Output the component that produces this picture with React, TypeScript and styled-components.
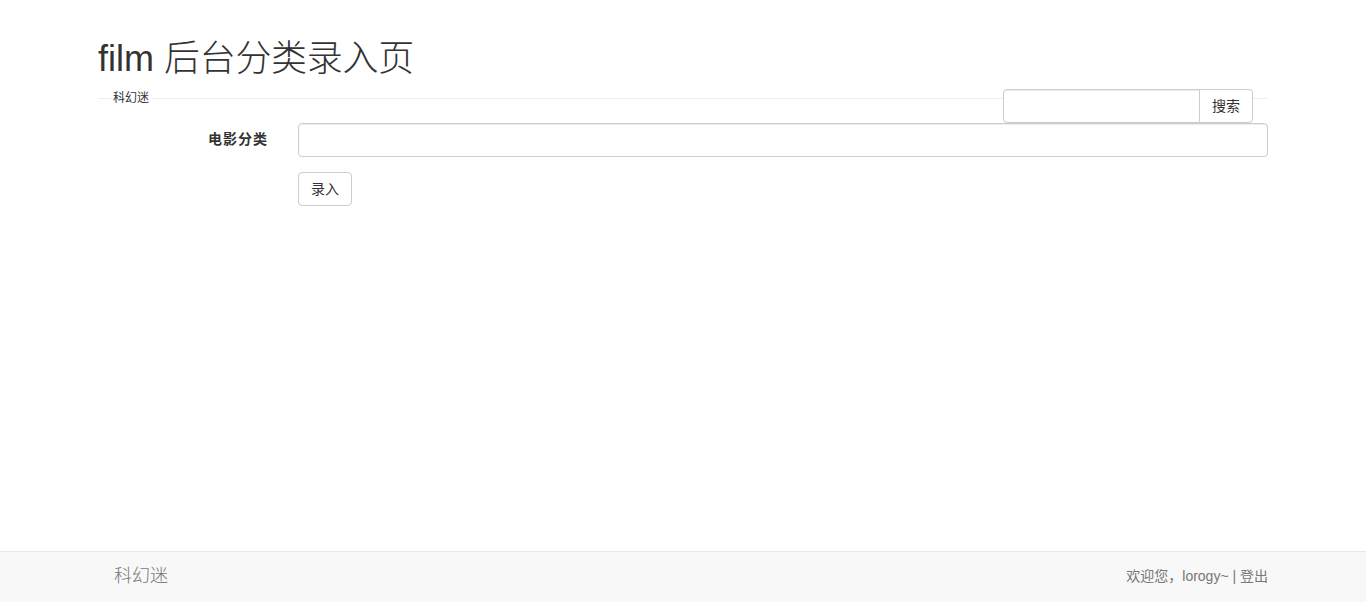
import React from 'react';
import styled, { createGlobalStyle } from 'styled-components';

const GlobalStyle = createGlobalStyle`
  html, body {
    margin: 0;
    padding: 0;
    background: #fff;
  }
  body {
    font-family: "Liberation Sans", "Noto Sans CJK SC", sans-serif;
    font-size: 14px;
    line-height: 1.42857;
    color: #333;
  }
  * {
    box-sizing: border-box;
  }
`;

const Page = styled.div`
  min-height: 602px;
  display: flex;
  flex-direction: column;
`;

const Main = styled.main`
  flex: 1;
`;

const Container = styled.div`
  width: 1170px;
  margin: 0 auto;
`;

const Title = styled.h1`
  margin: 0;
  padding-top: 39px;
  font-size: 36px;
  font-weight: 400;
  line-height: 40px;
  color: #333;

  span {
    font-weight: 300;
    letter-spacing: -0.3px;
  }
`;

const Toolbar = styled.div`
  position: relative;
  margin-top: 10px;
  height: 34px;
  display: flex;
  align-items: flex-start;
  justify-content: space-between;
  padding: 0 15px;

  &::before {
    content: '';
    position: absolute;
    left: 0;
    right: 0;
    top: 9px;
    border-top: 1px solid #eee;
  }
`;

const Legend = styled.span`
  position: relative;
  margin-top: 1px;
  padding-right: 3px;
  background: #fff;
  font-size: 12px;
  line-height: 17px;
  color: #333;
`;

const SearchGroup = styled.form`
  position: relative;
  display: flex;
  background: #fff;
`;

const SearchInput = styled.input`
  width: 197px;
  height: 34px;
  padding: 6px 12px;
  border: 1px solid #ccc;
  border-radius: 4px 0 0 4px;
  box-shadow: inset 0 1px 1px rgba(0, 0, 0, 0.075);
  font: inherit;
  outline: none;
`;

const Button = styled.button<{ $joined?: boolean }>`
  height: 34px;
  padding: 6px 12px;
  margin-left: ${(p) => (p.$joined ? '-1px' : '0')};
  border: 1px solid #ccc;
  border-radius: ${(p) => (p.$joined ? '0 4px 4px 0' : '4px')};
  background: #fff;
  color: #333;
  font-family: "Liberation Sans", "Noto Sans CJK SC", sans-serif;
  font-size: 14px;
  line-height: 20px;
  cursor: pointer;
`;

const Form = styled.form`
  display: flex;
  flex-direction: column;
  gap: 15px;
`;

const FormRow = styled.div`
  display: grid;
  grid-template-columns: 170px 1fr;
  column-gap: 30px;
  align-items: center;
`;

const Label = styled.label`
  text-align: right;
  font-weight: 700;
  font-size: 14px;
  letter-spacing: 1px;
  padding-right: 0;
`;

const TextInput = styled.input`
  width: 100%;
  height: 34px;
  padding: 6px 12px;
  border: 1px solid #ccc;
  border-radius: 4px;
  box-shadow: inset 0 1px 1px rgba(0, 0, 0, 0.075);
  font: inherit;
  outline: none;
`;

const Footer = styled.footer`
  height: 51px;
  background: #f8f8f8;
  border-top: 1px solid #e7e7e7;
`;

const FooterInner = styled(Container)`
  height: 100%;
  display: flex;
  align-items: center;
  justify-content: space-between;
  padding-left: 16px;
`;

const Brand = styled.a`
  font-size: 18px;
  font-weight: 300;
  color: #777;
  text-decoration: none;
`;

const UserInfo = styled.span`
  font-size: 14px;
  color: #777;

  a {
    color: #777;
    text-decoration: none;
  }
`;

export default function App() {
  return (
    <Page>
      <GlobalStyle />
      <Main>
        <Container>
          <Title>
            film <span>后台分类录入页</span>
          </Title>
          <Toolbar>
            <Legend>科幻迷</Legend>
            <SearchGroup onSubmit={(e) => e.preventDefault()}>
              <SearchInput type="text" />
              <Button $joined type="submit">搜索</Button>
            </SearchGroup>
          </Toolbar>
          <Form onSubmit={(e) => e.preventDefault()}>
            <FormRow>
              <Label>电影分类</Label>
              <TextInput type="text" />
            </FormRow>
            <FormRow>
              <span />
              <div>
                <Button type="submit">录入</Button>
              </div>
            </FormRow>
          </Form>
        </Container>
      </Main>
      <Footer>
        <FooterInner>
          <Brand href="#">科幻迷</Brand>
          <UserInfo>
            欢迎您，lorogy~ | <a href="#">登出</a>
          </UserInfo>
        </FooterInner>
      </Footer>
    </Page>
  );
}
